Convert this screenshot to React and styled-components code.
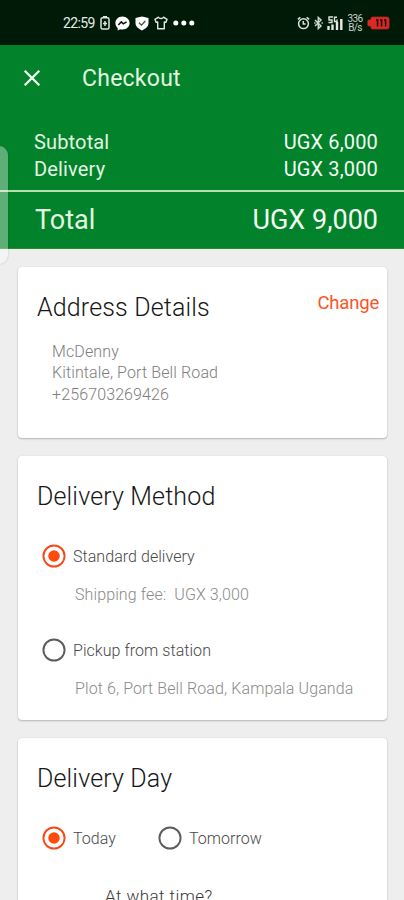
import React from "react";
import styled, { createGlobalStyle } from "styled-components";

const GlobalStyle = createGlobalStyle`
  *, *::before, *::after { box-sizing: border-box; }
  body { margin: 0; background: #eee; }
`;

const Screen = styled.div`
  position: relative;
  width: 404px;
  height: 900px;
  overflow: hidden;
  background: #eeeeee;
  font-family: Roboto, "Liberation Sans", sans-serif;
  display: flex;
  flex-direction: column;
`;

const StatusBar = styled.header`
  flex: none;
  height: 45px;
  padding: 1px 14px 0 63px;
  background: #001a08;
  color: #e6eae6;
  display: flex;
  align-items: center;
  justify-content: space-between;
`;

const StatusGroup = styled.div`
  display: flex;
  align-items: center;
  gap: ${(p) => p.$gap}px;
`;

const Clock = styled.span`
  font-size: 14px;
  line-height: 16px;
  letter-spacing: -0.6px;
  width: 32px;
  white-space: nowrap;
`;

const Speed = styled.span`
  width: 16px;
  font-size: 10px;
  line-height: 9px;
  letter-spacing: -0.7px;
  text-align: center;
  color: #cdd4ce;
`;

const Icon = styled.svg`
  display: block;
  flex: none;
`;

const Summary = styled.section`
  flex: none;
  height: 204px;
  background: #02822b;
  color: #e3f6e0;
  border-bottom: 1px solid #2c8a2c;
  display: flex;
  flex-direction: column;
`;

const TitleBar = styled.div`
  display: flex;
  align-items: center;
  height: 66px;
  padding-left: 23px;
  gap: 41px;
`;

const Title = styled.h1`
  margin: 0;
  padding-top: 1px;
  font-size: 23px;
  font-weight: 400;
  letter-spacing: 0.25px;
  line-height: 28px;
`;

const Lines = styled.div`
  height: 81px;
  padding: 18px 26px 0 34px;
  border-bottom: 2px solid #b5dfac;
`;

const Line = styled.div`
  display: flex;
  justify-content: space-between;
  font-size: 20px;
  line-height: 27px;
  letter-spacing: 0.15px;
`;

const Amount = styled.span`
  color: #f4fff4;
`;

const TotalLine = styled(Line)`
  padding: 10px 26px 0 35px;
  font-size: 27px;
  line-height: 36px;
  letter-spacing: 0;
`;

const Cards = styled.main`
  flex: none;
  display: flex;
  flex-direction: column;
  gap: 18px;
  padding: 18px 17px 0 18px;
`;

const Card = styled.section`
  flex: none;
  height: ${(p) => p.$height}px;
  padding: 26px 8px 0 19px;
  background: #fff;
  border-radius: 4px;
  box-shadow: 0 1px 2px rgba(0, 0, 0, 0.24), 0 0 1px rgba(0, 0, 0, 0.12);
`;

const CardHead = styled.div`
  display: flex;
  justify-content: space-between;
  align-items: flex-start;
`;

const Heading = styled.h2`
  margin: 0;
  font-size: 25px;
  line-height: 30px;
  font-weight: 300;
  letter-spacing: 0.15px;
  color: #161616;
`;

const ChangeLink = styled.a`
  font-size: 18.5px;
  line-height: 20px;
  letter-spacing: -0.2px;
  color: #fb5426;
`;

const Address = styled.address`
  margin: 18px 0 0 15px;
  font-style: normal;
  font-size: 16px;
  font-weight: 300;
  line-height: 21.3px;
  letter-spacing: 0.12px;
  color: #7d7d7d;
`;

const AddressLine = styled.div``;

const Choices = styled.div`
  display: flex;
  height: 24px;
  margin: ${(p) => p.$top}px 0 0 5px;
`;

const Choice = styled.label`
  display: flex;
  align-items: flex-start;
  gap: 8px;
  width: 116px;
  white-space: nowrap;
  font-size: 16px;
  line-height: 26px;
  font-weight: 300;
  letter-spacing: 0.05px;
  color: #484848;
`;

const Dial = styled.span`
  flex: none;
  width: 24px;
  height: 24px;
  border-radius: 50%;
  border: 2px solid ${(p) => (p.$on ? "#f9481a" : "#5c5c5c")};
  margin: 0 -1px 0 0;
  transform: scale(0.96);
  display: grid;
  place-items: center;

  &::after {
    content: "";
    width: 12px;
    height: 12px;
    border-radius: 50%;
    background: ${(p) => (p.$on ? "#ff4a0c" : "transparent")};
  }
`;

const Note = styled.p`
  margin: ${(p) => p.$top}px 0 0 38px;
  font-size: 16px;
  line-height: 20px;
  font-weight: 300;
  letter-spacing: 0.11px;
  white-space: pre;
  color: #8a8a8a;
`;

const Question = styled.p`
  margin: 36px 0 0 68px;
  font-size: 17px;
  line-height: 20px;
  font-weight: 300;
  letter-spacing: 0.45px;
  color: #383838;
`;

const EdgeHandle = styled.div`
  position: absolute;
  left: -10px;
  top: 146px;
  width: 18px;
  height: 118px;
  border-radius: 9px;
  background: rgba(255, 255, 255, 0.36);
  box-shadow: 0 0 2px rgba(0, 0, 0, 0.22);
`;

const BatterySaver = () => (
  <Icon width="10" height="14" viewBox="0 0 10 14">
    <rect x="1" y="1.8" width="8" height="11.2" rx="1.6" fill="none" stroke="#dfe5df" strokeWidth="1.5" />
    <path d="M3 .8h4M5 5v5M3 7.5h4" stroke="#dfe5df" strokeWidth="1.5" />
  </Icon>
);

const Messenger = () => (
  <Icon width="15" height="15" viewBox="0 0 15 15">
    <path d="M7.5.5C3.4.5.4 3.4.4 7.1c0 2 .9 3.7 2.3 4.9v2.6l2.4-1.3c.8.2 1.500.3 2.400.3 4.100 0 7.100-2.900 7.100-6.500S11.600.5 7.500.5z" fill="#fff" />
    <path d="M3.300 9l3-3.100 2 1.900 3.300-2" fill="none" stroke="#001a08" strokeWidth="1.5" />
  </Icon>
);

const Shield = () => (
  <Icon width="14" height="15" viewBox="0 0 14 15">
    <path d="M7 .5l6.5 1.6v5c0 3.4-3 5.900-6.500 7.400C3.500 13 .5 10.500.5 7.100v-5z" fill="#fff" />
    <path d="M4 6.800l2.500 2.300L10.300 5" fill="none" stroke="#335038" strokeWidth="1.2" />
  </Icon>
);

const Shirt = () => (
  <Icon width="14" height="14" viewBox="0 0 14 14">
    <path d="M4.5 1.200L1 3.400l1.200 3 1.500-.5v6.900h6.600V5.900l1.500.5 1.200-3-3.500-2.200C8.600 3 5.400 3 4.500 1.200z" fill="none" stroke="#e2e8e2" strokeWidth="1.4" strokeLinejoin="round" />
  </Icon>
);

const More = () => (
  <Icon width="22" height="6" viewBox="0 0 22 6">
    <circle cx="2.8" cy="3" r="2.5" fill="#fff" />
    <circle cx="10.8" cy="3" r="2.5" fill="#fff" />
    <circle cx="18.8" cy="3" r="2.5" fill="#fff" />
  </Icon>
);

const Alarm = () => (
  <Icon width="13" height="14" viewBox="0 0 13 14">
    <circle cx="6.5" cy="7.7" r="4.9" fill="none" stroke="#dce2dc" strokeWidth="1.5" />
    <path d="M.8 3.3l2.600-2M12.200 3.300l-2.600-2M6.300 5v3h2.300" fill="none" stroke="#dce2dc" strokeWidth="1.5" />
  </Icon>
);

const Bluetooth = () => (
  <Icon width="9" height="14" viewBox="0 0 9 14">
    <path d="M1 4l6 6-2.700 2.500v-11L7 4l-6 6" fill="none" stroke="#cfd6d0" strokeWidth="1.5" />
    <path d="M.2 7h1.300M7.500 7h1.300" stroke="#cfd6d0" strokeWidth="1.3" />
  </Icon>
);

const Signal = () => (
  <Icon width="16" height="15" viewBox="0 0 16 15">
    <path d="M6 1H2v3h3v2.500H1.500M10 1.300H7.500v4.200H10V3.500" fill="none" stroke="#dde3dd" strokeWidth="1.4" />
    <path d="M1.500 14v-4M5.500 14V8.500M10 14V6M14.300 14V3" stroke="#e6ebe6" strokeWidth="2.4" />
  </Icon>
);

const Battery = () => (
  <Icon width="23" height="14" viewBox="0 0 23 14">
    <path d="M4.800 1.200h15.400a1.700 1.700 0 0 1 1.700 1.700v8.200a1.700 1.700 0 0 1-1.700 1.700H4.800L3.500 9.700H1V4.300h2.500z" fill="#da2a23" stroke="#da2a23" strokeLinejoin="round" />
    <path d="M9 4h1.600v6.500M13 4h1.600v6.500M17 4h1.600v6.500" fill="none" stroke="#240705" strokeWidth="1.6" />
  </Icon>
);

const Close = () => (
  <Icon width="18" height="18" viewBox="0 0 18 18">
    <path d="M1.700 1.700l14.600 14.600M16.300 1.700L1.700 16.300" stroke="#f2fff2" strokeWidth="2.300" />
  </Icon>
);

const Radio = ({ on, children }) => (
  <Choice>
    <Dial $on={on} />
    {children}
  </Choice>
);

export default function App() {
  return (
    <Screen>
      <GlobalStyle />
      <StatusBar>
        <StatusGroup $gap={5}>
          <Clock>22:59</Clock>
          <BatterySaver />
          <Messenger />
          <Shield />
          <Shirt />
          <More />
        </StatusGroup>
        <StatusGroup $gap={4}>
          <Alarm />
          <Bluetooth />
          <Signal />
          <Speed>336 B/s</Speed>
          <Battery />
        </StatusGroup>
      </StatusBar>

      <Summary>
        <TitleBar>
          <Close />
          <Title>Checkout</Title>
        </TitleBar>
        <Lines>
          <Line>
            <span>Subtotal</span>
            <Amount>UGX 6,000</Amount>
          </Line>
          <Line>
            <span>Delivery</span>
            <Amount>UGX 3,000</Amount>
          </Line>
        </Lines>
        <TotalLine>
          <span>Total</span>
          <Amount>UGX 9,000</Amount>
        </TotalLine>
      </Summary>

      <Cards>
        <Card $height={171}>
          <CardHead>
            <Heading>Address Details</Heading>
            <ChangeLink>Change</ChangeLink>
          </CardHead>
          <Address>
            <AddressLine>McDenny</AddressLine>
            <AddressLine>Kitintale, Port Bell Road</AddressLine>
            <AddressLine>+256703269426</AddressLine>
          </Address>
        </Card>

        <Card $height={264}>
          <Heading>Delivery Method</Heading>
          <Choices $top={32}>
            <Radio on>Standard delivery</Radio>
          </Choices>
          <Note $top={17}>{"Shipping fee:  UGX 3,000"}</Note>
          <Choices $top={33}>
            <Radio>Pickup from station</Radio>
          </Choices>
          <Note $top={17}>Plot 6, Port Bell Road, Kampala Uganda</Note>
        </Card>

        <Card $height={260}>
          <Heading>Delivery Day</Heading>
          <Choices $top={32}>
            <Radio on>Today</Radio>
            <Radio>Tomorrow</Radio>
          </Choices>
          <Question>At what time?</Question>
        </Card>
      </Cards>

      <EdgeHandle />
    </Screen>
  );
}
